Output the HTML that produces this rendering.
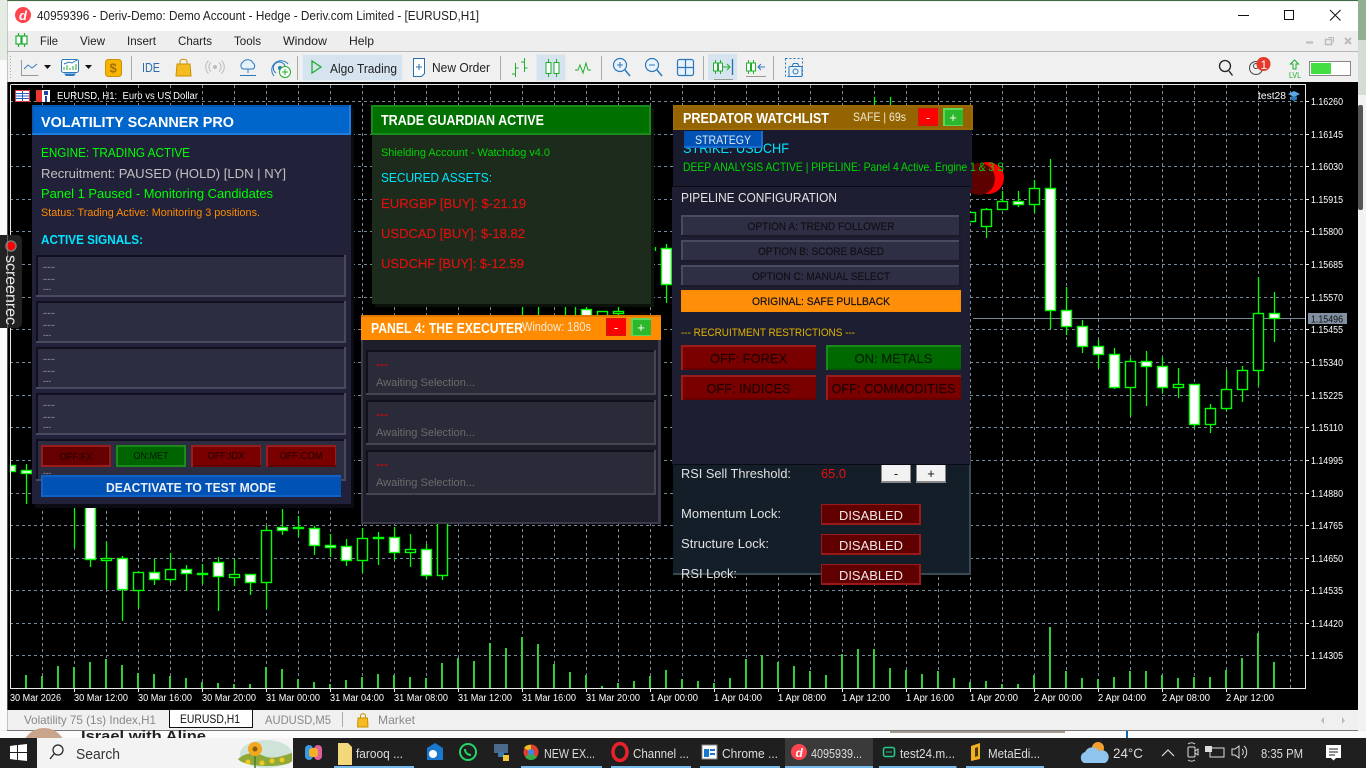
<!DOCTYPE html>
<html lang="en"><head><meta charset="utf-8"><title>Deriv-Demo</title>
<style>
html,body{margin:0;padding:0;width:1366px;height:768px;overflow:hidden;background:#eee}
svg{display:block;position:absolute;left:0;top:0}
text{font-family:"Liberation Sans",sans-serif;white-space:pre}
.wh{fill:#fff}.g{fill:#0f0}.c{fill:#00e5ff}
.ax{fill:#fff;font-size:10px}
.m{fill:#222;font-size:12px}
.hd{fill:#fff;font-size:14.5px;font-weight:bold}
.sg{fill:#a0a0a0;font-size:9px}
.aw{fill:#6c6c6c;font-size:11px}
.rd{fill:#e01010;font-size:13.3px;stroke:#e01010;stroke-width:.15}
.op{fill:#101018;font-size:11px;text-anchor:middle;stroke:#101018;stroke-width:.2}
.rs{fill:#1e0000;font-size:13px;text-anchor:middle;stroke:#1e0000;stroke-width:.15}
.lb{fill:#e0e0e0;font-size:12.5px}
.dis{fill:#f0e8e8;font-size:13px;text-anchor:middle}
.wk{stroke:#0f0;stroke-width:1.3;fill:none}
.bw rect{fill:#fff;stroke:#0f0;stroke-width:1.4}
.bh rect{fill:#000;stroke:#0f0;stroke-width:1.4}
</style></head><body>
<svg width="1366" height="768" viewBox="0 0 1366 768" xmlns="http://www.w3.org/2000/svg">
<defs>
<pattern id="vg" x="42" y="85" width="32" height="6" patternUnits="userSpaceOnUse"><rect width="1" height="3" fill="#778899"/></pattern>
</defs>
<!-- desktop behind -->
<rect width="1366" height="768" fill="#ececec"/>
<rect width="1366" height="2" fill="#3f6b45"/>
<rect x="0" width="7" height="730" fill="#fafafa"/>
<rect x="0" y="0" width="7" height="60" fill="#e4ece4"/>
<rect x="1358" y="0" width="8" height="40" fill="#90b090"/>
<rect x="1358" y="40" width="8" height="55" fill="#d4ddd4"/>
<rect x="1358" y="95" width="8" height="635" fill="#f2f2f2"/>
<rect x="1358" y="105" width="5" height="105" rx="2" fill="#555"/>
<!-- window -->
<rect x="7" y="1" width="1351" height="729" fill="#f0f0f0"/>
<rect x="7" y="2" width="1351" height="29" fill="#fff"/>
<circle cx="23" cy="15" r="8" fill="#ff444f"/>
<text x="19" y="20" fill="#fff" font-size="13" font-weight="bold" font-style="italic">d</text>
<text x="37" y="20" fill="#222" font-size="12.5" textLength="442" lengthAdjust="spacingAndGlyphs">40959396 - Deriv-Demo: Demo Account - Hedge - Deriv.com Limited - [EURUSD,H1]</text>
<path d="M1238 15.5h11" stroke="#111" fill="none"/>
<rect x="1284.5" y="10.5" width="9" height="9" fill="none" stroke="#111"/>
<path d="M1330 10l10.5 10.5M1340.5 10l-10.5 10.5" stroke="#111" fill="none"/>
<!-- menu -->
<rect x="7" y="31" width="1351" height="20" fill="#eee"/>
<rect x="7" y="51" width="1351" height="1" fill="#b8b8b8"/>
<path d="M18.5 33v14M24.5 33v14" stroke="#1fae2e" stroke-width="1.2"/>
<rect x="16" y="36" width="5" height="8" fill="#fff" stroke="#1fae2e" stroke-width="1.2"/><rect x="22" y="36" width="5" height="8" fill="#fff" stroke="#1fae2e" stroke-width="1.2"/>
<text class="m" x="40" y="45" textLength="18" lengthAdjust="spacingAndGlyphs">File</text>
<text class="m" x="80" y="45" textLength="25" lengthAdjust="spacingAndGlyphs">View</text>
<text class="m" x="127" y="45" textLength="29" lengthAdjust="spacingAndGlyphs">Insert</text>
<text class="m" x="178" y="45" textLength="34" lengthAdjust="spacingAndGlyphs">Charts</text>
<text class="m" x="234" y="45" textLength="27" lengthAdjust="spacingAndGlyphs">Tools</text>
<text class="m" x="283" y="45" textLength="44" lengthAdjust="spacingAndGlyphs">Window</text>
<text class="m" x="349" y="45" textLength="25" lengthAdjust="spacingAndGlyphs">Help</text>
<path d="M1306 42.5h7" stroke="#bbb" stroke-width="2"/><rect x="1325.5" y="39.5" width="6" height="5" fill="none" stroke="#bbb" stroke-width="1.5"/><path d="M1328 37.5h5.5v5" stroke="#bbb" fill="none"/><path d="M1345 38l6 6M1351 38l-6 6" stroke="#bbb" stroke-width="2"/>
<!-- toolbar -->
<rect x="7" y="52" width="1351" height="30" fill="#f0f0f0"/>
<path d="M10.5 56v24" stroke="#aaa" stroke-dasharray="1 2"/>
<path d="M21.5 60v15.5h17" stroke="#999" fill="none"/><path d="M24 69l4-4 4 3 5-4" stroke="#3a7cc0" fill="none"/>
<path d="M44 65h7l-3.5 4z" fill="#111"/>
<rect x="61.5" y="59.5" width="17" height="13" rx="2" fill="#fff" stroke="#2a78bd"/><path d="M64 70v-3M67 70v-5M70 70v-2M73 70v-4M76 70v-6" stroke="#1fae2e"/><path d="M64 64l5-2 3 1 5-3" stroke="#2a78bd" fill="none"/><path d="M64 73.5h12l-2 2.5h-8z" fill="#2a78bd"/>
<path d="M85 65h7l-3.5 4z" fill="#111"/>
<rect x="105.5" y="59.5" width="16" height="17" rx="3" fill="#f7b500" stroke="#c99200"/><text x="109.5" y="72.5" fill="#a86f00" font-size="13" font-weight="bold">$</text>
<path d="M131.5 56v24M297.5 56v24M500.5 56v24M601.5 56v24M703.5 56v24M773.5 56v24" stroke="#aaa"/>
<text x="142" y="72" fill="#2a6db0" font-size="13" textLength="18" lengthAdjust="spacingAndGlyphs">IDE</text>
<path d="M177 64h13l1 12h-15z" fill="#f5bb22" stroke="#c99200"/><path d="M180 64v-2.5c0-3 7-3 7 0V64" stroke="#c99200" fill="none"/>
<circle cx="215" cy="67" r="2" fill="#bbb"/><path d="M211 62.5a6 6 0 0 0 0 9M219 62.5a6 6 0 0 1 0 9M208.5 60.5a9 9 0 0 0 0 13M221.5 60.5a9 9 0 0 1 0 13" stroke="#bbb" fill="none"/>
<path d="M243 69a4 4 0 0 1 0-7 6 6 0 0 1 10 1 3.5 3.5 0 0 1 0 6z" fill="#e8f2fa" stroke="#2a78bd"/><path d="M248 69v4M240 75.5h16" stroke="#2a78bd" fill="none"/>
<path d="M274 76a9 9 0 1 1 14-12" stroke="#2a78bd" fill="none"/><path d="M276 73a6 6 0 1 1 9-7" stroke="#2a78bd" fill="none"/><circle cx="280" cy="68" r="2" fill="#2a78bd"/>
<circle cx="285" cy="72" r="5.5" fill="#fff" stroke="#1fae2e"/><path d="M282 72h6M285 69v6" stroke="#1fae2e"/>
<rect x="302.5" y="54.5" width="100" height="26" fill="#d6e4f0" stroke="#e6eef6"/>
<path d="M312 61v12l9-6z" fill="none" stroke="#1fae2e" stroke-width="1.3"/>
<text x="330" y="73" fill="#222" font-size="12.5" textLength="67" lengthAdjust="spacingAndGlyphs">Algo Trading</text>
<path d="M413.5 58.5h11v15l-3 3h-8z" fill="#fff" stroke="#2a6db0"/><path d="M416 67h6M419 64v6" stroke="#2a6db0"/>
<text x="432" y="72" fill="#222" font-size="12.5" textLength="58" lengthAdjust="spacingAndGlyphs">New Order</text>
<path d="M515.5 63v14M512 74h3.5M515.5 68h3M524.5 58v14M521 62h3.5M524.5 68h3" stroke="#1fae2e" fill="none"/>
<rect x="536.5" y="54.5" width="29" height="26" fill="#d6e4f0"/>
<path d="M548.5 59v18M556.5 59v18" stroke="#1fae2e"/><rect x="546" y="62.5" width="5" height="11" fill="#fff" stroke="#1fae2e"/><rect x="554" y="62.5" width="5" height="11" fill="#fff" stroke="#1fae2e"/>
<path d="M575 70h3l2-5 3 8 3-10 2 7h3" stroke="#1fae2e" fill="none"/>
<circle cx="620" cy="65" r="6.5" fill="#eaf2fa" stroke="#2a78bd" stroke-width="1.2"/><path d="M617 65h6M620 62v6" stroke="#2a78bd"/><path d="M625 70l5 6" stroke="#2a78bd" stroke-width="1.5"/>
<circle cx="652" cy="65" r="6.5" fill="#eaf2fa" stroke="#2a78bd" stroke-width="1.2"/><path d="M649 65h6" stroke="#2a78bd"/><path d="M657 70l5 6" stroke="#2a78bd" stroke-width="1.5"/>
<rect x="677.5" y="59.5" width="16" height="16" rx="2" fill="#eaf2fa" stroke="#2a78bd" stroke-width="1.2"/><path d="M685.5 60v15M678 67.5h15" stroke="#2a78bd" stroke-width="1.2"/>
<rect x="708" y="54" width="29" height="26" fill="#d6e4f0"/>
<path d="M715.5 60v14M720.5 60v14" stroke="#1fae2e"/><rect x="713.5" y="63" width="4" height="8" fill="#fff" stroke="#1fae2e"/><rect x="718.5" y="63" width="4" height="8" fill="#fff" stroke="#1fae2e"/>
<path d="M723 67h7M727 64l3 3-3 3" stroke="#1fae2e" fill="none"/><path d="M732.5 59v16" stroke="#2a6db0" stroke-width="1.3"/><path d="M714 79.5h19" stroke="#999"/>
<path d="M748.5 60v14M753.5 60v14" stroke="#1fae2e"/><rect x="746.5" y="63" width="4" height="8" fill="#fff" stroke="#1fae2e"/><rect x="751.5" y="63" width="4" height="8" fill="#fff" stroke="#1fae2e"/>
<path d="M765 67h-7M761 64l-3 3 3 3" stroke="#2a78bd" fill="none"/><path d="M746 76.5h20" stroke="#999"/>
<rect x="785.5" y="58.5" width="17" height="18" fill="none" stroke="#2a78bd" stroke-dasharray="2 2"/>
<rect x="789" y="66.5" width="13" height="10" rx="1" fill="#eaf2fa" stroke="#2a78bd"/><path d="M792 66l1.5-2.5h4L799 66" stroke="#2a78bd" fill="none"/><circle cx="795.5" cy="71.5" r="2.5" fill="none" stroke="#2a78bd"/>
<circle cx="1225" cy="66" r="5.5" fill="none" stroke="#222" stroke-width="1.3"/><path d="M1229 71l3.5 4.500" stroke="#222" stroke-width="1.4"/>
<circle cx="1256" cy="68" r="6.5" fill="none" stroke="#444"/><circle cx="1256" cy="66" r="2.5" fill="none" stroke="#444"/>
<circle cx="1263.5" cy="64" r="7" fill="#e8382a"/><text x="1260.5" y="69" fill="#fff" font-size="12">1</text>
<path d="M1294.5 60l-4 4h2.5v5h3v-5h2.5z" fill="none" stroke="#1fae2e"/><text x="1289" y="78" fill="#1fae2e" font-size="8.5" textLength="12" lengthAdjust="spacingAndGlyphs">LVL</text>
<rect x="1309.5" y="61.5" width="41" height="14" fill="#fff" stroke="#888"/><rect x="1311" y="63" width="20" height="11" fill="#42de42"/>
<!-- black chart -->
<rect x="7" y="82" width="1351" height="628" fill="#000"/>
<!-- grid -->
<rect x="42" y="85" width="1250" height="603" fill="url(#vg)"/>
<path d="M10 101.5H1305M10 134.5H1305M10 166.5H1305M10 199.5H1305M10 231.5H1305M10 264.5H1305M10 297.5H1305M10 329.5H1305M10 362.5H1305M10 395.5H1305M10 427.5H1305M10 460.5H1305M10 493.5H1305M10 525.5H1305M10 558.5H1305M10 590.5H1305M10 623.5H1305M10 655.5H1305" stroke="#778899" stroke-dasharray="3 3" fill="none"/>
<path d="M1305 101.5h4M1305 134.5h4M1305 166.5h4M1305 199.5h4M1305 231.5h4M1305 264.5h4M1305 297.5h4M1305 329.5h4M1305 362.5h4M1305 395.5h4M1305 427.5h4M1305 460.5h4M1305 493.5h4M1305 525.5h4M1305 558.5h4M1305 590.5h4M1305 623.5h4M1305 655.5h4" stroke="#eee"/>
<path d="M74.5 688v4M138.5 688v4M202.5 688v4M266.5 688v4M330.5 688v4M394.5 688v4M458.5 688v4M522.5 688v4M586.5 688v4M650.5 688v4M714.5 688v4M778.5 688v4M842.5 688v4M906.5 688v4M970.5 688v4M1034.5 688v4M1098.5 688v4M1162.5 688v4M1226.5 688v4" stroke="#eee"/>
<!-- price line -->
<path d="M973 318.5H1305" stroke="#778899"/>
<!-- volume -->
<path stroke="#32cd32" stroke-width="2" fill="none" d="M26 688V675M42 688V676M58 688V666M74 688V667M90 688V662M106 688V659M122 688V665M138 688V673M154 688V674M170 688V676M186 688V678M202 688V682M218 688V683M234 688V684M250 688V684M266 688V667M282 688V669M298 688V679M314 688V682M330 688V684M346 688V680M362 688V677M378 688V674M394 688V675M410 688V677M426 688V678M442 688V663M458 688V658M474 688V661M490 688V643M506 688V648M522 688V637M538 688V644M554 688V664M570 688V672M586 688V675M602 688V686M618 688V683M634 688V681M650 688V676M666 688V670M682 688V679M698 688V681M714 688V683M730 688V678M746 688V659M762 688V655M778 688V662M794 688V666M810 688V671M826 688V675M842 688V654M858 688V649M874 688V649M890 688V668M906 688V670M922 688V674M938 688V671M954 688V678M970 688V682M986 688V681M1002 688V684M1018 688V684M1034 688V675M1050 688V627M1066 688V671M1082 688V678M1098 688V679M1114 688V677M1130 688V671M1146 688V671M1162 688V675M1178 688V678M1194 688V677M1210 688V677M1226 688V670M1242 688V658M1258 688V633M1274 688V662"/>
<!-- wicks -->
<path class="wk" d="M986.5 208V238M1002.5 191V210M1018.5 191V207M1034.5 180V213M1050.5 159V329M1066.5 287V335M1082.5 320V353M1098.5 340V368M1114.5 348V389M1130.5 358V416M1146.5 351V406M1162.5 357V393M1178.5 368V398M1194.5 384V428M1210.5 404V433M1226.5 370V411M1242.5 366V402M1258.5 277V386M1274.5 292V342M26.5 464V504M74.5 500V548M90.5 500V567M106.5 542V589M122.5 556V621M138.5 572V608M154.5 559V585M170.5 553V583M186.5 565V591M202.5 564V584M218.5 557V611M234.5 559V586M250.5 574V595M266.5 526V609M282.5 509V535M298.5 516V537M314.5 526V555M330.5 534V557M346.5 539V566M362.5 528V573M378.5 532V565M394.5 527V560M410.5 534V567M426.5 544V579M442.5 520V580M666.5 244V303M655.5 247V251M522.5 306V316M538.5 306V316M565.5 306V316M575.5 306V316M586.5 306V316M602.5 311V316M618.5 306V316M874.5 97V106M890.5 97V106"/>
<!-- hollow bodies -->
<g class="bh">
<rect x="981.5" y="209.5" width="10" height="17"/><rect x="997.5" y="201.5" width="10" height="8"/><rect x="1029.5" y="188.5" width="10" height="16"/><rect x="1125.5" y="361.5" width="10" height="26"/><rect x="1173.5" y="384.5" width="10" height="3"/><rect x="1205.5" y="408.5" width="10" height="16"/><rect x="1221.5" y="389.5" width="10" height="19"/><rect x="1237.5" y="370.5" width="10" height="19"/><rect x="1253.5" y="313.5" width="10" height="57"/>
<rect x="965.5" y="212.5" width="10" height="9"/>
<rect x="101.5" y="558.5" width="10" height="2"/><rect x="133.5" y="572.5" width="10" height="18"/><rect x="165.5" y="569.5" width="10" height="10"/><rect x="229.5" y="574.5" width="10" height="3"/><rect x="261.5" y="530.5" width="10" height="52"/><rect x="357.5" y="538.5" width="10" height="22"/><rect x="405.5" y="549.5" width="10" height="3"/><rect x="437.5" y="520.5" width="10" height="55"/><rect x="597.5" y="311.5" width="10" height="8"/><rect x="613.5" y="311.5" width="10" height="2"/>
</g>
<!-- white bodies -->
<g class="bw">
<rect x="1013.5" y="201.5" width="10" height="3"/><rect x="1045.5" y="188.5" width="10" height="122"/><rect x="1061.5" y="310.5" width="10" height="16"/><rect x="1077.5" y="326.5" width="10" height="20"/><rect x="1093.5" y="346.5" width="10" height="8"/><rect x="1109.5" y="354.5" width="10" height="33"/><rect x="1141.5" y="361.5" width="10" height="5"/><rect x="1157.5" y="366.5" width="10" height="21"/><rect x="1189.5" y="384.5" width="10" height="40"/><rect x="1269.5" y="313.5" width="10" height="5"/>
<rect x="10.5" y="465.5" width="5" height="6"/><rect x="21.5" y="470.5" width="10" height="3"/><rect x="85.5" y="500.5" width="10" height="59"/><rect x="117.5" y="558.5" width="10" height="31"/><rect x="149.5" y="572.5" width="10" height="7"/><rect x="181.5" y="569.5" width="10" height="4"/><rect x="197.5" y="573.5" width="10" height="1"/><rect x="213.5" y="562.5" width="10" height="14"/><rect x="245.5" y="574.5" width="10" height="8"/><rect x="277.5" y="527.5" width="10" height="3"/><rect x="293.5" y="527.5" width="10" height="1"/><rect x="309.5" y="528.5" width="10" height="17"/><rect x="325.5" y="545.5" width="10" height="2"/><rect x="341.5" y="546.5" width="10" height="14"/><rect x="373.5" y="537.5" width="10" height="1"/><rect x="389.5" y="537.5" width="10" height="15"/><rect x="421.5" y="549.5" width="10" height="26"/><rect x="661.5" y="248.5" width="10" height="36"/><rect x="581.5" y="309.5" width="10" height="8"/>
</g>
<path d="M10.5 85V688.5H1305.5V84.5H10.5" stroke="#e8e8e8" fill="none"/>
<!-- axis labels -->
<g class="ax">
<text x="1311" y="105" textLength="32" lengthAdjust="spacingAndGlyphs">1.16260</text>
<text x="1311" y="138" textLength="32" lengthAdjust="spacingAndGlyphs">1.16145</text>
<text x="1311" y="170" textLength="32" lengthAdjust="spacingAndGlyphs">1.16030</text>
<text x="1311" y="203" textLength="32" lengthAdjust="spacingAndGlyphs">1.15915</text>
<text x="1311" y="235" textLength="32" lengthAdjust="spacingAndGlyphs">1.15800</text>
<text x="1311" y="268" textLength="32" lengthAdjust="spacingAndGlyphs">1.15685</text>
<text x="1311" y="301" textLength="32" lengthAdjust="spacingAndGlyphs">1.15570</text>
<text x="1311" y="333" textLength="32" lengthAdjust="spacingAndGlyphs">1.15455</text>
<text x="1311" y="366" textLength="32" lengthAdjust="spacingAndGlyphs">1.15340</text>
<text x="1311" y="399" textLength="32" lengthAdjust="spacingAndGlyphs">1.15225</text>
<text x="1311" y="431" textLength="32" lengthAdjust="spacingAndGlyphs">1.15110</text>
<text x="1311" y="464" textLength="32" lengthAdjust="spacingAndGlyphs">1.14995</text>
<text x="1311" y="497" textLength="32" lengthAdjust="spacingAndGlyphs">1.14880</text>
<text x="1311" y="529" textLength="32" lengthAdjust="spacingAndGlyphs">1.14765</text>
<text x="1311" y="562" textLength="32" lengthAdjust="spacingAndGlyphs">1.14650</text>
<text x="1311" y="594" textLength="32" lengthAdjust="spacingAndGlyphs">1.14535</text>
<text x="1311" y="627" textLength="32" lengthAdjust="spacingAndGlyphs">1.14420</text>
<text x="1311" y="659" textLength="32" lengthAdjust="spacingAndGlyphs">1.14305</text>
<text x="10" y="701" textLength="51" lengthAdjust="spacingAndGlyphs">30 Mar 2026</text>
<text x="74" y="701" textLength="54" lengthAdjust="spacingAndGlyphs">30 Mar 12:00</text>
<text x="138" y="701" textLength="54" lengthAdjust="spacingAndGlyphs">30 Mar 16:00</text>
<text x="202" y="701" textLength="54" lengthAdjust="spacingAndGlyphs">30 Mar 20:00</text>
<text x="266" y="701" textLength="54" lengthAdjust="spacingAndGlyphs">31 Mar 00:00</text>
<text x="330" y="701" textLength="54" lengthAdjust="spacingAndGlyphs">31 Mar 04:00</text>
<text x="394" y="701" textLength="54" lengthAdjust="spacingAndGlyphs">31 Mar 08:00</text>
<text x="458" y="701" textLength="54" lengthAdjust="spacingAndGlyphs">31 Mar 12:00</text>
<text x="522" y="701" textLength="54" lengthAdjust="spacingAndGlyphs">31 Mar 16:00</text>
<text x="586" y="701" textLength="54" lengthAdjust="spacingAndGlyphs">31 Mar 20:00</text>
<text x="650" y="701" textLength="48" lengthAdjust="spacingAndGlyphs">1 Apr 00:00</text>
<text x="714" y="701" textLength="48" lengthAdjust="spacingAndGlyphs">1 Apr 04:00</text>
<text x="778" y="701" textLength="48" lengthAdjust="spacingAndGlyphs">1 Apr 08:00</text>
<text x="842" y="701" textLength="48" lengthAdjust="spacingAndGlyphs">1 Apr 12:00</text>
<text x="906" y="701" textLength="48" lengthAdjust="spacingAndGlyphs">1 Apr 16:00</text>
<text x="970" y="701" textLength="48" lengthAdjust="spacingAndGlyphs">1 Apr 20:00</text>
<text x="1034" y="701" textLength="48" lengthAdjust="spacingAndGlyphs">2 Apr 00:00</text>
<text x="1098" y="701" textLength="48" lengthAdjust="spacingAndGlyphs">2 Apr 04:00</text>
<text x="1162" y="701" textLength="48" lengthAdjust="spacingAndGlyphs">2 Apr 08:00</text>
<text x="1226" y="701" textLength="48" lengthAdjust="spacingAndGlyphs">2 Apr 12:00</text>
</g>
<rect x="1308" y="313" width="39" height="11" fill="#8090a0"/>
<text x="1311" y="322.5" fill="#111" font-size="10" textLength="32" lengthAdjust="spacingAndGlyphs">1.15496</text>
<!-- chart header -->
<rect x="15" y="90" width="15" height="12" fill="#e03a3a"/><rect x="16" y="91" width="13" height="10" fill="#fff"/><path d="M16 93.5h13M16 96h13M16 98.5h13M22.5 91v10" stroke="#2a5fc0"/>
<rect x="36" y="90" width="6" height="12" fill="#e33"/><rect x="42" y="90" width="8" height="12" fill="#fff"/><rect x="44" y="91" width="4" height="4" fill="#24a"/><rect x="45" y="96" width="2" height="6" fill="#24a"/>
<text x="57" y="99" fill="#fff" font-size="10" textLength="141" lengthAdjust="spacingAndGlyphs">EURUSD, H1:  Euro vs US Dollar</text>
<text x="1258" y="99" fill="#fff" font-size="10" textLength="28" lengthAdjust="spacingAndGlyphs">test28</text>
<path d="M1288 94l6-3 6 3-6 3z" fill="#5aa8e8"/><path d="M1291 96.5v3l3 1.5 3-1.5v-3" fill="#2a78bd"/>
<!-- red circle -->
<circle cx="988" cy="178" r="16" fill="#f00"/>
<circle cx="979" cy="179" r="16" fill="#5c0000"/>

<!-- PANEL 1 -->
<rect x="35" y="108" width="319" height="400" fill="#0b0b14"/>
<rect x="32" y="105" width="319" height="399" fill="#21213a"/>
<rect x="32" y="105" width="319" height="30" fill="#1f7fe0"/>
<rect x="32" y="105" width="317" height="28" fill="#0a56b0"/>
<rect x="34" y="107" width="315" height="26" fill="#0066cc"/>
<text class="hd" x="41" y="127" textLength="193" lengthAdjust="spacingAndGlyphs">VOLATILITY SCANNER PRO</text>
<text class="g" x="41" y="157" font-size="12.5" textLength="149" lengthAdjust="spacingAndGlyphs">ENGINE: TRADING ACTIVE</text>
<text fill="#c0c0c0" x="41" y="178" font-size="13.3" textLength="245" lengthAdjust="spacingAndGlyphs">Recruitment: PAUSED (HOLD) [LDN | NY]</text>
<text class="g" x="41" y="198" font-size="13.3" textLength="232" lengthAdjust="spacingAndGlyphs">Panel 1 Paused - Monitoring Candidates</text>
<text fill="#ff8c00" x="41" y="216" font-size="11" textLength="219" lengthAdjust="spacingAndGlyphs">Status: Trading Active: Monitoring 3 positions.</text>
<text fill="#00e5ff" x="41" y="244" font-size="12.5" font-weight="bold" textLength="102" lengthAdjust="spacingAndGlyphs">ACTIVE SIGNALS:</text>
<!-- rows -->
<g>
<rect x="36" y="255" width="310" height="42" fill="#4a4a5e"/><rect x="36" y="255" width="308" height="40" fill="#10101f"/><rect x="38" y="257" width="306" height="38" fill="#2d2d42"/>
<rect x="36" y="301" width="310" height="42" fill="#4a4a5e"/><rect x="36" y="301" width="308" height="40" fill="#10101f"/><rect x="38" y="303" width="306" height="38" fill="#2d2d42"/>
<rect x="36" y="347" width="310" height="42" fill="#4a4a5e"/><rect x="36" y="347" width="308" height="40" fill="#10101f"/><rect x="38" y="349" width="306" height="38" fill="#2d2d42"/>
<rect x="36" y="393" width="310" height="42" fill="#4a4a5e"/><rect x="36" y="393" width="308" height="40" fill="#10101f"/><rect x="38" y="395" width="306" height="38" fill="#2d2d42"/>
<rect x="36" y="439" width="310" height="42" fill="#4a4a5e"/><rect x="36" y="439" width="308" height="40" fill="#10101f"/><rect x="38" y="441" width="306" height="38" fill="#2d2d42"/>
</g>
<g class="sg">
<text x="43" y="270" textLength="12" lengthAdjust="spacingAndGlyphs">---</text><text x="43" y="282" textLength="12" lengthAdjust="spacingAndGlyphs">---</text><text x="43" y="292" textLength="8" lengthAdjust="spacingAndGlyphs">---</text>
<text x="43" y="316" textLength="12" lengthAdjust="spacingAndGlyphs">---</text><text x="43" y="328" textLength="12" lengthAdjust="spacingAndGlyphs">---</text><text x="43" y="338" textLength="8" lengthAdjust="spacingAndGlyphs">---</text>
<text x="43" y="362" textLength="12" lengthAdjust="spacingAndGlyphs">---</text><text x="43" y="374" textLength="12" lengthAdjust="spacingAndGlyphs">---</text><text x="43" y="384" textLength="8" lengthAdjust="spacingAndGlyphs">---</text>
<text x="43" y="408" textLength="12" lengthAdjust="spacingAndGlyphs">---</text><text x="43" y="420" textLength="12" lengthAdjust="spacingAndGlyphs">---</text><text x="43" y="430" textLength="8" lengthAdjust="spacingAndGlyphs">---</text>
<text x="43" y="476" textLength="8" lengthAdjust="spacingAndGlyphs">---</text>
</g>
<rect x="41" y="445" width="70" height="22" fill="#9a1c1c"/><rect x="43" y="447" width="66" height="18" fill="#660000"/>
<rect x="116" y="445" width="70" height="22" fill="#1a8a1a"/><rect x="118" y="447" width="66" height="18" fill="#006400"/>
<rect x="191" y="445" width="70" height="22" fill="#9a1c1c"/><rect x="193" y="447" width="67" height="18" fill="#7a0000"/><rect x="193" y="465" width="68" height="2" fill="#660000"/>
<rect x="266" y="445" width="70" height="22" fill="#9a1c1c"/><rect x="268" y="447" width="67" height="18" fill="#7a0000"/><rect x="268" y="465" width="68" height="2" fill="#660000"/>
<text x="76" y="460" fill="#1a0000" font-size="10.5" text-anchor="middle" textLength="33" lengthAdjust="spacingAndGlyphs">OFF:FX</text>
<text x="151" y="459" fill="#001a00" font-size="10.5" text-anchor="middle" textLength="35" lengthAdjust="spacingAndGlyphs">ON:MET</text>
<text x="226" y="459" fill="#1a0000" font-size="10.5" text-anchor="middle" textLength="37" lengthAdjust="spacingAndGlyphs">OFF:IDX</text>
<text x="301" y="459" fill="#1a0000" font-size="10.5" text-anchor="middle" textLength="43" lengthAdjust="spacingAndGlyphs">OFF:COM</text>
<rect x="41" y="475" width="300" height="22" fill="#0f63c8"/><rect x="43" y="477" width="298" height="18" fill="#0052b4"/>
<text x="191" y="492" fill="#e8eef8" font-size="13" font-weight="bold" text-anchor="middle" textLength="170" lengthAdjust="spacingAndGlyphs">DEACTIVATE TO TEST MODE</text>

<!-- PANEL 2 -->
<rect x="375" y="108" width="279" height="199" fill="#0a120a"/>
<rect x="372" y="105" width="279" height="199" fill="#1d2b1d"/>
<rect x="371" y="105" width="280" height="30" fill="#1a8a1a"/>
<rect x="373" y="107" width="276" height="26" fill="#007000"/>
<text class="hd" x="381" y="125" textLength="163" lengthAdjust="spacingAndGlyphs">TRADE GUARDIAN ACTIVE</text>
<text fill="#00d400" x="381" y="156" font-size="11" textLength="169" lengthAdjust="spacingAndGlyphs">Shielding Account - Watchdog v4.0</text>
<text fill="#00e5ff" x="381" y="182" font-size="12.5" textLength="111" lengthAdjust="spacingAndGlyphs">SECURED ASSETS:</text>
<text class="rd" x="381" y="208" textLength="145" lengthAdjust="spacingAndGlyphs">EURGBP [BUY]: $-21.19</text>
<text class="rd" x="381" y="238" textLength="144" lengthAdjust="spacingAndGlyphs">USDCAD [BUY]: $-18.82</text>
<text class="rd" x="381" y="268" textLength="143" lengthAdjust="spacingAndGlyphs">USDCHF [BUY]: $-12.59</text>

<!-- PANEL 4 -->
<rect x="361" y="315" width="300" height="209" fill="#3a3a4a"/>
<rect x="363" y="340" width="295" height="182" fill="#1e1e2a"/>
<rect x="361" y="315" width="300" height="25" fill="#ff8c00"/>
<rect x="361" y="315" width="300" height="2" fill="#e07800"/>
<text class="hd" x="371" y="333" textLength="152" lengthAdjust="spacingAndGlyphs">PANEL 4: THE EXECUTER</text>
<text fill="#f2e8d8" x="522" y="331" font-size="12.5" textLength="69" lengthAdjust="spacingAndGlyphs">Window: 180s</text>
<rect x="606" y="318" width="20" height="18" fill="#e01010"/><rect x="608" y="320" width="18" height="14" fill="#f00"/>
<text x="616" y="332" fill="#fff" font-size="13" text-anchor="middle">-</text>
<rect x="631" y="318" width="20" height="18" fill="#5ad85a"/><rect x="633" y="320" width="18" height="15" fill="#2cb82c"/>
<text x="641" y="332" fill="#fff" font-size="13" text-anchor="middle">+</text>
<g>
<rect x="366" y="350" width="290" height="45" fill="#45454f"/><rect x="366" y="350" width="288" height="43" fill="#10101a"/><rect x="368" y="352" width="286" height="41" fill="#2a2a38"/>
<rect x="366" y="400" width="290" height="45" fill="#45454f"/><rect x="366" y="400" width="288" height="43" fill="#10101a"/><rect x="368" y="402" width="286" height="41" fill="#2a2a38"/>
<rect x="366" y="450" width="290" height="45" fill="#45454f"/><rect x="366" y="450" width="288" height="43" fill="#10101a"/><rect x="368" y="452" width="286" height="41" fill="#2a2a38"/>
</g>
<text x="376" y="368" fill="#f00" font-size="12" textLength="12" lengthAdjust="spacingAndGlyphs">---</text>
<text class="aw" x="376" y="386" textLength="99" lengthAdjust="spacingAndGlyphs">Awaiting Selection...</text>
<text x="376" y="418" fill="#f00" font-size="12" textLength="12" lengthAdjust="spacingAndGlyphs">---</text>
<text class="aw" x="376" y="436" textLength="99" lengthAdjust="spacingAndGlyphs">Awaiting Selection...</text>
<text x="376" y="468" fill="#f00" font-size="12" textLength="12" lengthAdjust="spacingAndGlyphs">---</text>
<text class="aw" x="376" y="486" textLength="99" lengthAdjust="spacingAndGlyphs">Awaiting Selection...</text>

<!-- PANEL 3 -->
<rect x="673" y="130" width="299" height="60" fill="#1a1a2e"/>
<rect x="673" y="105" width="300" height="25" fill="#9a6a08"/>
<rect x="675" y="107" width="296" height="21" fill="#946400"/>
<text class="hd" x="683" y="123" textLength="146" lengthAdjust="spacingAndGlyphs">PREDATOR WATCHLIST</text>
<text fill="#f0e8d8" x="853" y="121" font-size="12" textLength="53" lengthAdjust="spacingAndGlyphs">SAFE | 69s</text>
<rect x="918" y="108" width="20" height="18" fill="#e01010"/><rect x="920" y="110" width="18" height="14" fill="#f00"/>
<text x="928" y="122" fill="#fff" font-size="13" text-anchor="middle">-</text>
<rect x="943" y="108" width="20" height="18" fill="#5ad85a"/><rect x="945" y="110" width="18" height="15" fill="#2cb82c"/>
<text x="953" y="122" fill="#fff" font-size="13" text-anchor="middle">+</text>
<text fill="#00e5ff" x="683" y="153" font-size="14" textLength="106" lengthAdjust="spacingAndGlyphs">STRIKE: USDCHF</text>
<rect x="684" y="131" width="79" height="17" fill="#1a6ed0"/><rect x="684" y="131" width="77" height="15" fill="#0052b4"/>
<text fill="#dfe8f5" x="723" y="144" font-size="11.5" text-anchor="middle" textLength="56" lengthAdjust="spacingAndGlyphs">STRATEGY</text>
<text fill="#00d800" x="683" y="171" font-size="12" textLength="321" lengthAdjust="spacingAndGlyphs">DEEP ANALYSIS ACTIVE | PIPELINE: Panel 4 Active. Engine 1 &amp; 3 S</text>

<!-- lower panel -->
<rect x="673" y="455" width="298" height="120" fill="#3a4a55"/>
<rect x="673" y="455" width="296" height="118" fill="#141e28"/>
<text class="lb" x="681" y="478" textLength="110" lengthAdjust="spacingAndGlyphs">RSI Sell Threshold:</text>
<text fill="#e81010" x="821" y="478" font-size="13" textLength="25" lengthAdjust="spacingAndGlyphs">65.0</text>
<text class="lb" x="681" y="518" textLength="100" lengthAdjust="spacingAndGlyphs">Momentum Lock:</text>
<text class="lb" x="681" y="548" textLength="88" lengthAdjust="spacingAndGlyphs">Structure Lock:</text>
<text class="lb" x="681" y="578" textLength="56" lengthAdjust="spacingAndGlyphs">RSI Lock:</text>
<rect x="881" y="465" width="30" height="18" fill="#888"/><rect x="882" y="465" width="28" height="16" fill="#f2f2f2"/>
<rect x="916" y="465" width="30" height="18" fill="#888"/><rect x="917" y="465" width="28" height="16" fill="#f2f2f2"/>
<text x="896" y="478" fill="#222" font-size="13" text-anchor="middle">-</text>
<text x="931" y="478" fill="#111" font-size="13" text-anchor="middle">+</text>
<rect x="821" y="504" width="100" height="21" fill="#9a1a1a"/><rect x="822" y="505" width="97" height="18" fill="#600000"/>
<rect x="821" y="534" width="100" height="21" fill="#9a1a1a"/><rect x="822" y="535" width="97" height="18" fill="#600000"/>
<rect x="821" y="564" width="100" height="21" fill="#9a1a1a"/><rect x="822" y="565" width="97" height="18" fill="#600000"/>
<text class="dis" x="871" y="520" textLength="64" lengthAdjust="spacingAndGlyphs">DISABLED</text>
<text class="dis" x="871" y="550" textLength="64" lengthAdjust="spacingAndGlyphs">DISABLED</text>
<text class="dis" x="871" y="580" textLength="64" lengthAdjust="spacingAndGlyphs">DISABLED</text>

<!-- pipeline -->
<rect x="672" y="186" width="298" height="279" fill="#0a0a14"/>
<rect x="672" y="187" width="298" height="277" fill="#1e1e32"/>
<text fill="#e4e4e4" x="681" y="202" font-size="12.5" textLength="156" lengthAdjust="spacingAndGlyphs">PIPELINE CONFIGURATION</text>
<g>
<rect x="681" y="215" width="280" height="22" fill="#1a1a28"/><rect x="681" y="215" width="278" height="20" fill="#4a4a60"/><rect x="683" y="217" width="276" height="18" fill="#2e2e44"/>
<rect x="681" y="240" width="280" height="22" fill="#1a1a28"/><rect x="681" y="240" width="278" height="20" fill="#4a4a60"/><rect x="683" y="242" width="276" height="18" fill="#2e2e44"/>
<rect x="681" y="265" width="280" height="22" fill="#1a1a28"/><rect x="681" y="265" width="278" height="20" fill="#4a4a60"/><rect x="683" y="267" width="276" height="18" fill="#2e2e44"/>
<rect x="681" y="290" width="280" height="22" fill="#ff8c00"/><rect x="683" y="292" width="276" height="18" fill="#ff8f08"/>
</g>
<text class="op" x="821" y="230" textLength="147" lengthAdjust="spacingAndGlyphs">OPTION A: TREND FOLLOWER</text>
<text class="op" x="821" y="255" textLength="126" lengthAdjust="spacingAndGlyphs">OPTION B: SCORE BASED</text>
<text class="op" x="821" y="280" textLength="138" lengthAdjust="spacingAndGlyphs">OPTION C: MANUAL SELECT</text>
<text class="op" x="821" y="305" textLength="138" lengthAdjust="spacingAndGlyphs">ORIGINAL: SAFE PULLBACK</text>
<text fill="#e0b400" x="681" y="336" font-size="11" textLength="174" lengthAdjust="spacingAndGlyphs">--- RECRUITMENT RESTRICTIONS ---</text>
<g>
<rect x="681" y="345" width="135" height="25" fill="#9a1c1c"/><rect x="683" y="347" width="133" height="21" fill="#7a0000"/><rect x="683" y="368" width="133" height="2" fill="#660000"/>
<rect x="826" y="345" width="135" height="25" fill="#1a8a1a"/><rect x="828" y="347" width="133" height="21" fill="#006a00"/><rect x="828" y="368" width="133" height="2" fill="#005800"/>
<rect x="681" y="375" width="135" height="25" fill="#9a1c1c"/><rect x="683" y="377" width="133" height="21" fill="#7a0000"/><rect x="683" y="398" width="133" height="2" fill="#660000"/>
<rect x="826" y="375" width="135" height="25" fill="#9a1c1c"/><rect x="828" y="377" width="133" height="21" fill="#7a0000"/><rect x="828" y="398" width="133" height="2" fill="#660000"/>
</g>
<text class="rs" x="748.5" y="363" textLength="77" lengthAdjust="spacingAndGlyphs">OFF: FOREX</text>
<text class="rs" x="893.5" y="363" style="fill:#002000;stroke:#002000" textLength="78" lengthAdjust="spacingAndGlyphs">ON: METALS</text>
<text class="rs" x="748.5" y="393" textLength="84" lengthAdjust="spacingAndGlyphs">OFF: INDICES</text>
<text class="rs" x="893.5" y="393" textLength="124" lengthAdjust="spacingAndGlyphs">OFF: COMMODITIES</text>

<!-- screenrec -->
<rect x="-6" y="235" width="28" height="93" rx="5" fill="#222"/>
<circle cx="11" cy="246" r="5" fill="#f00" stroke="#777" stroke-width="1.5"/>
<text transform="translate(6,255) rotate(90)" fill="#eee" font-size="15.5" textLength="70" lengthAdjust="spacingAndGlyphs">screenrec</text>

<!-- tab bar -->
<rect x="7" y="710" width="1351" height="20" fill="#f0f0f0"/>
<text x="24" y="724" fill="#888" font-size="12" textLength="132" lengthAdjust="spacingAndGlyphs">Volatility 75 (1s) Index,H1</text>
<rect x="169.5" y="709.5" width="83" height="18" fill="#fff" stroke="#111"/>
<text x="180" y="723" fill="#111" font-size="12" textLength="60" lengthAdjust="spacingAndGlyphs">EURUSD,H1</text>
<text x="265" y="724" fill="#888" font-size="12" textLength="66" lengthAdjust="spacingAndGlyphs">AUDUSD,M5</text>
<path d="M342.5 712v15" stroke="#aaa"/>
<path d="M358 718h9.500l.5 9h-10.500z" fill="#f5bb22" stroke="#c99200"/><path d="M360.5 718v-2c0-3 5-3 5 0v2" stroke="#c99200" fill="none"/>
<text x="378" y="724" fill="#888" font-size="12" textLength="37" lengthAdjust="spacingAndGlyphs">Market</text>
<path d="M1324 717l-3 3.500 3 3.500z" fill="#bbb"/><path d="M1342 717l3 3.500-3 3.500z" fill="#bbb"/>
<rect x="7" y="730" width="1351" height="1" fill="#777"/>
<rect x="7" y="0" width="1" height="730" fill="#999" opacity=".5"/>

<!-- behind strip -->
<rect x="0" y="731" width="1366" height="7" fill="#fbfbfb"/>
<rect x="1126" y="731" width="2" height="7" fill="#0a6ab4"/>
<rect x="890" y="731" width="175" height="2" fill="#6a5a4a" opacity=".6"/>
<circle cx="44" cy="750" r="22" fill="#c9a58c"/>
<text x="81" y="741" fill="#222" font-size="15" font-weight="bold" textLength="125" lengthAdjust="spacingAndGlyphs">Israel with Aline</text>
<!-- taskbar -->
<rect x="0" y="738" width="1366" height="30" fill="#1f1f1f"/>
<path d="M10 746l7-1v7h-7zM18 745l9-1v8h-9zM10 753h7v7l-7-1zM18 753h9v8l-9-1z" fill="#fff"/>
<rect x="37" y="738" width="256" height="30" fill="#f3f3f3"/>
<circle cx="58" cy="750" r="5" fill="none" stroke="#222" stroke-width="1.2"/><path d="M54 754l-4 5" stroke="#222" stroke-width="1.3"/>
<text x="76" y="759" fill="#333" font-size="14.5" textLength="44" lengthAdjust="spacingAndGlyphs">Search</text>
<ellipse cx="266" cy="754" rx="26" ry="14" fill="#cfe3d8"/><path d="M238 759c8-7 18-7 26-3s18 0 28-3v8c-4 7-48 7-54-2z" fill="#8fa83a"/><circle cx="255" cy="749" r="7" fill="#f2a71e"/><circle cx="255" cy="749" r="2.500" fill="#8a5a10"/><path d="M255 756v12" stroke="#4a7a2a" stroke-width="1.500"/><circle cx="248" cy="762" r="2.500" fill="#f0c820"/><circle cx="262" cy="763" r="2.500" fill="#f0c820"/><circle cx="272" cy="761" r="2.500" fill="#f0c820"/><circle cx="282" cy="760" r="2.500" fill="#f0c820"/>
<rect x="305" y="745" width="8" height="15" rx="4" fill="#3a9be0"/><rect x="314" y="745" width="8" height="15" rx="4" fill="#e0609a"/><rect x="309" y="748" width="9" height="9" rx="3" fill="#f5b02a"/>
<path d="M338 743h10l4 4v18h-14z" fill="#f2d87a"/>
<text x="356" y="758" fill="#ddd" font-size="12.5" textLength="47" lengthAdjust="spacingAndGlyphs">farooq ...</text>
<path d="M435 743l8 5v12h-16v-12z" fill="#1a78d0"/><circle cx="433" cy="754" r="4" fill="#fff"/>
<circle cx="468" cy="752" r="8" fill="#1f1f1f" stroke="#25d366" stroke-width="2"/><path d="M465 749c0 4 3 6 6 6" stroke="#25d366" stroke-width="2" fill="none"/>
<rect x="494" y="744" width="14" height="9" fill="#4a6a8a"/><rect x="498" y="752" width="6" height="5" fill="#3a78b0"/><rect x="503" y="755" width="6" height="6" fill="#f0c83a"/>
<circle cx="531" cy="752" r="7.5" fill="#e04030"/><path d="M531 752L537 757A7.5 7.5 0 0 1 525 757z" fill="#3aa84a"/><path d="M531 752L524 748A7.5 7.5 0 0 1 531 745z" fill="#f0c020"/><circle cx="531" cy="752" r="3" fill="#3a88e8"/>
<text x="544" y="758" fill="#ddd" font-size="12.5" textLength="51" lengthAdjust="spacingAndGlyphs">NEW EX...</text>
<ellipse cx="620" cy="752" rx="7" ry="8.5" fill="none" stroke="#e8202a" stroke-width="3.5"/>
<text x="633" y="758" fill="#ddd" font-size="12.5" textLength="56" lengthAdjust="spacingAndGlyphs">Channel ...</text>
<rect x="702" y="745" width="15" height="14" fill="#fff" stroke="#888"/><rect x="704" y="749" width="5" height="8" fill="#1a78d0"/><rect x="710" y="749" width="5" height="2" fill="#1a78d0"/><rect x="710" y="753" width="5" height="2" fill="#1a78d0"/>
<text x="722" y="758" fill="#ddd" font-size="12.5" textLength="56" lengthAdjust="spacingAndGlyphs">Chrome ...</text>
<rect x="785" y="738" width="88" height="30" fill="#3a3a3a"/>
<circle cx="799" cy="752" r="8" fill="#ff444f"/><text x="795.5" y="757" fill="#fff" font-size="12" font-weight="bold" font-style="italic">d</text>
<text x="811" y="758" fill="#ddd" font-size="12.5" textLength="51" lengthAdjust="spacingAndGlyphs">4095939...</text>
<rect x="883.5" y="747.5" width="11" height="9" rx="2" fill="none" stroke="#22c98a" stroke-width="1.5"/><path d="M886 752h6" stroke="#22c98a"/>
<text x="900" y="758" fill="#ddd" font-size="12.5" textLength="55" lengthAdjust="spacingAndGlyphs">test24.m...</text>
<path d="M971 746l9-3v16l-9 2z" fill="#f0b020"/><path d="M975 748l3-1v9l-3 1z" fill="#4a3a10"/>
<text x="988" y="758" fill="#ddd" font-size="12.5" textLength="52" lengthAdjust="spacingAndGlyphs">MetaEdi...</text>
<!-- underlines -->
<path d="M334 767h80M521 767h81M611 767h80M700 767h80M785 767h88M879 767h77.5M966 767h78" stroke="#76b9ed" stroke-width="2"/>
<!-- tray -->
<circle cx="1098" cy="748" r="6" fill="#f2a030"/><path d="M1084 763a6 6 0 0 1 1-11 8 8 0 0 1 14-1 6 6 0 0 1 6 12z" fill="#8ec4ee"/>
<text x="1113" y="758" fill="#ddd" font-size="14" textLength="30" lengthAdjust="spacingAndGlyphs">24°C</text>
<path d="M1162 756l6-6 6 6" stroke="#ddd" stroke-width="1.2" fill="none"/>
<rect x="1188" y="747" width="7" height="10" rx="1" fill="none" stroke="#ddd"/><path d="M1195 751l3-2v6l-3-2" stroke="#ddd" fill="none"/><path d="M1188 744a6 6 0 0 1 7 0M1188 760a6 6 0 0 0 7 0" stroke="#ddd" fill="none"/>
<rect x="1210" y="748" width="14" height="9" fill="none" stroke="#ddd"/><rect x="1205" y="746" width="7" height="6" fill="#ddd"/>
<path d="M1232 749h3l4-3v12l-4-3h-3z" fill="none" stroke="#ddd"/><path d="M1242 749a4 4 0 0 1 0 6M1244 746a8 8 0 0 1 0 12" stroke="#ddd" fill="none"/>
<text x="1261" y="758" fill="#ddd" font-size="12.5" textLength="42" lengthAdjust="spacingAndGlyphs">8:35 PM</text>
<path d="M1326 745h15v13h-5l-2.5 2.5-2.5-2.5h-5z" fill="#fff"/><path d="M1329 749h9M1329 752h9M1329 755h6" stroke="#222"/>
</svg>
</body></html>
